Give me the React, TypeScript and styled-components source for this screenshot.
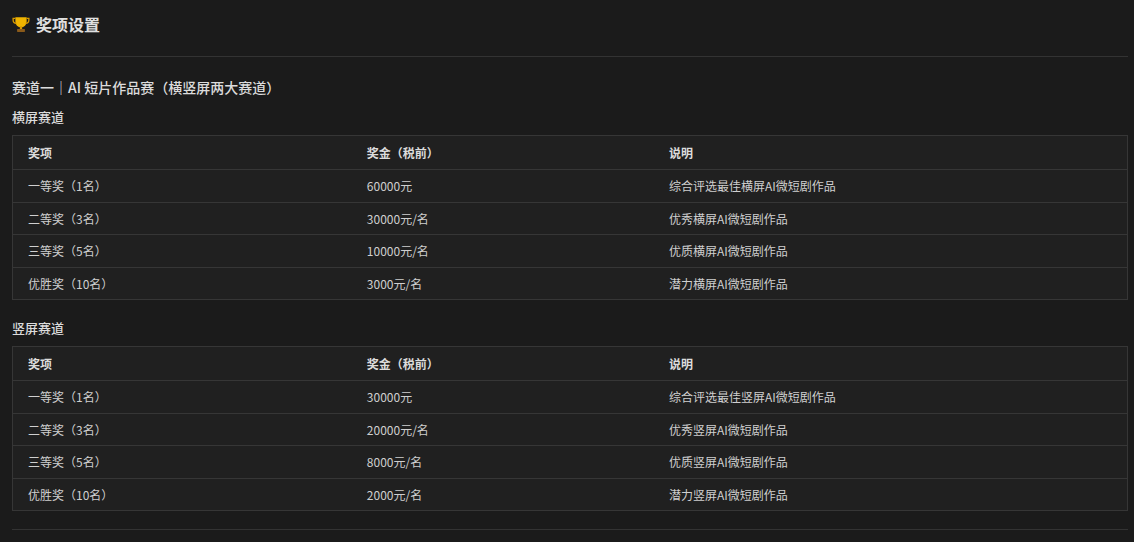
import React from "react";
import styled, { createGlobalStyle } from "styled-components";

const Global = createGlobalStyle`
    body {
        margin: 0;
        background: #1b1b1b;
        font-family: "Microsoft YaHei", "Noto Sans CJK SC", "Liberation Sans", sans-serif;
    }
`;

const Page = styled.div`
    padding: 0 6px 14px 12px;
    color: #dcdcdc;
`;

const Header = styled.h2`
    display: flex;
    align-items: center;
    gap: 6px;
    margin: 0;
    height: 48px;
    font-size: 16px;
    font-weight: bold;
    color: #e0e0e0;
`;

const Rule = styled.hr<{ $gap: number }>`
    border: none;
    border-top: 1px solid #333;
    margin: ${(p) => p.$gap}px 0 0;
`;

const Section = styled.h3`
    margin: 19px 0 0;
    font-size: 14px;
    font-weight: 500;
    line-height: 22px;
    color: #dcdcdc;
`;

const Track = styled.h4`
    margin: 9px 0 8px;
    font-size: 13px;
    font-weight: 500;
    line-height: 20px;
    color: #dcdcdc;
`;

const Table = styled.table`
    width: 100%;
    table-layout: fixed;
    border-collapse: collapse;
    background: #202020;
    border: 1px solid #363636;
    font-size: 12px;
    margin-bottom: 18px;
`;

const Th = styled.th<{ $w?: string }>`
    text-align: left;
    font-weight: bold;
    height: 33px;
    padding: 0 15px;
    width: ${(p) => p.$w || "auto"};
    color: #dcdcdc;
    border-bottom: 1px solid #363636;
`;

const Td = styled.td`
    height: 31.5px;
    padding: 0 15px;
    color: #cfcfcf;
    border-bottom: 1px solid #363636;
`;

const Trophy = () => (
    <svg width="18" height="18" viewBox="0 0 16 16">
        <path d="M3 2h10v4a5 5 0 0 1-10 0z" fill="#f0b400" />
        <path d="M3 3H1v1.5A3 3 0 0 0 4 7.5M13 3h2v1.5A3 3 0 0 1 12 7.5" stroke="#d89a00" strokeWidth="1.2" fill="none" />
        <rect x="7" y="10" width="2" height="2.5" fill="#d89a00" />
        <rect x="4.5" y="12.5" width="7" height="2.5" rx="0.5" fill="#8a5a1a" />
    </svg>
);

type Row = [string, string, string];

const horizontal: Row[] = [
    ["一等奖（1名）", "60000元", "综合评选最佳横屏AI微短剧作品"],
    ["二等奖（3名）", "30000元/名", "优秀横屏AI微短剧作品"],
    ["三等奖（5名）", "10000元/名", "优质横屏AI微短剧作品"],
    ["优胜奖（10名）", "3000元/名", "潜力横屏AI微短剧作品"],
];

const vertical: Row[] = [
    ["一等奖（1名）", "30000元", "综合评选最佳竖屏AI微短剧作品"],
    ["二等奖（3名）", "20000元/名", "优秀竖屏AI微短剧作品"],
    ["三等奖（5名）", "8000元/名", "优质竖屏AI微短剧作品"],
    ["优胜奖（10名）", "2000元/名", "潜力竖屏AI微短剧作品"],
];

const PrizeTable = ({ rows }: { rows: Row[] }) => (
    <Table>
        <thead>
            <tr>
                <Th $w="27.7%">奖项</Th>
                <Th $w="24.4%">奖金（税前）</Th>
                <Th>说明</Th>
            </tr>
        </thead>
        <tbody>
            {rows.map((r) => (
                <tr key={r[0]}>
                    <Td>{r[0]}</Td>
                    <Td>{r[1]}</Td>
                    <Td>{r[2]}</Td>
                </tr>
            ))}
        </tbody>
    </Table>
);

export default function App() {
    return (
        <Page>
            <Global />
            <Header>
                <Trophy />
                奖项设置
            </Header>
            <Rule $gap={8} />
            <Section>赛道一｜AI 短片作品赛（横竖屏两大赛道）</Section>
            <Track>横屏赛道</Track>
            <PrizeTable rows={horizontal} />
            <Track>竖屏赛道</Track>
            <PrizeTable rows={vertical} />
            <Rule $gap={4} />
        </Page>
    );
}
